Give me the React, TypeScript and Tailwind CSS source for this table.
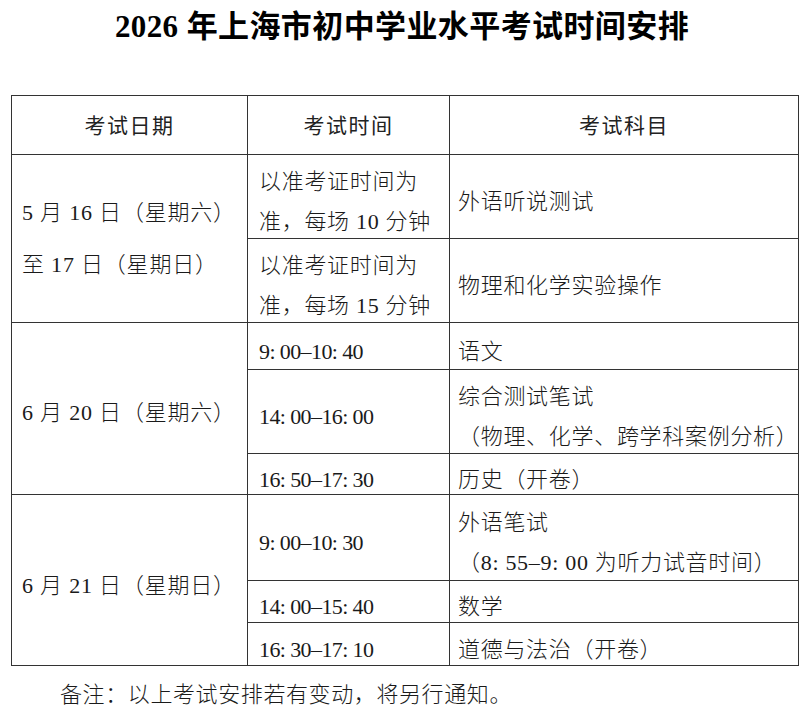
import React from 'react';

const serif = "font-['Liberation_Serif','Noto_Sans_CJK_SC',serif]";
const cell = 'border-[1.5px] border-[#333] align-middle p-0';

type Row = { time: React.ReactNode; subject: React.ReactNode; h: string };
type Group = { date: React.ReactNode; rows: Row[] };

const groups: Group[] = [
  {
    date: (
      <div className="leading-[52px] pl-[10px] tracking-[0.8px]">
        5 月 16 日（星期六）
        <br />
        至 17 日（星期日）
      </div>
    ),
    rows: [
      {
        h: 'h-[84px]',
        time: (
          <div className="leading-[40px] tracking-[0.7px]">
            以准考证时间为
            <br />
            准，每场 10 分钟
          </div>
        ),
        subject: '外语听说测试',
      },
      {
        h: 'h-[84px]',
        time: (
          <div className="leading-[40px] tracking-[0.7px]">
            以准考证时间为
            <br />
            准，每场 15 分钟
          </div>
        ),
        subject: '物理和化学实验操作',
      },
    ],
  },
  {
    date: <div className="pl-[10px] translate-y-[4px] tracking-[0.8px]">6 月 20 日（星期六）</div>,
    rows: [
      { h: 'h-[47px]', time: '9: 00–10: 40', subject: '语文' },
      {
        h: 'h-[84px]',
        time: '14: 00–16: 00',
        subject: (
          <div className="leading-[40px] whitespace-nowrap">
            综合测试笔试
            <br />
            （物理、化学、跨学科案例分析）
          </div>
        ),
      },
      { h: 'h-[41px]', time: '16: 50–17: 30', subject: '历史（开卷）' },
    ],
  },
  {
    date: <div className="pl-[10px] translate-y-[5px] tracking-[0.8px]">6 月 21 日（星期日）</div>,
    rows: [
      {
        h: 'h-[86px]',
        time: '9: 00–10: 30',
        subject: (
          <div className="leading-[40px] whitespace-nowrap">
            外语笔试
            <br />
            （8: 55–9: 00 为听力试音时间）
          </div>
        ),
      },
      { h: 'h-[42px]', time: '14: 00–15: 40', subject: '数学' },
      { h: 'h-[43px]', time: '16: 30–17: 10', subject: '道德与法治（开卷）' },
    ],
  },
];

export default function App() {
  return (
    <div className={`w-[804px] h-[716px] bg-white text-[#1a1a1a] ${serif}`}>
      <div className="h-[54px] flex items-center justify-center text-[31px] font-bold text-black tracking-[0.4px]">
        2026 年上海市初中学业水平考试时间安排
      </div>

      <div className="pt-[41px] pl-[11px]">
        <table className="table-fixed border-collapse w-[787px] text-[22px] font-light">
          <colgroup>
            <col className="w-[236px]" />
            <col className="w-[202px]" />
            <col className="w-[349px]" />
          </colgroup>
          <thead>
            <tr className="h-[59px] font-['Noto_Sans_CJK_SC',sans-serif] font-normal text-[21px] text-[#222] tracking-[1.5px]">
              <th className={`${cell} font-normal text-center`}>考试日期</th>
              <th className={`${cell} font-normal text-center`}>考试时间</th>
              <th className={`${cell} font-normal text-center`}>考试科目</th>
            </tr>
          </thead>
          <tbody>
            {groups.map((g, gi) =>
              g.rows.map((r, ri) => (
                <tr key={`${gi}-${ri}`} className={r.h}>
                  {ri === 0 && (
                    <td rowSpan={g.rows.length} className={`${cell} whitespace-nowrap`}>
                      {g.date}
                    </td>
                  )}
                  <td className={`${cell} pl-[11px] whitespace-nowrap`}>
                    <div className={`translate-y-[5px] ${typeof r.time === 'string' ? 'tracking-[-0.6px]' : ''}`}>
                      {r.time}
                    </div>
                  </td>
                  <td className={`${cell} pl-[8px] tracking-[0.7px]`}>
                    <div className="translate-y-[5px]">{r.subject}</div>
                  </td>
                </tr>
              ))
            )}
          </tbody>
        </table>
      </div>

      <div className="pl-[60px] pt-[12px] text-[22px] font-light tracking-[0.6px]">
        备注：以上考试安排若有变动，将另行通知。
      </div>
    </div>
  );
}
